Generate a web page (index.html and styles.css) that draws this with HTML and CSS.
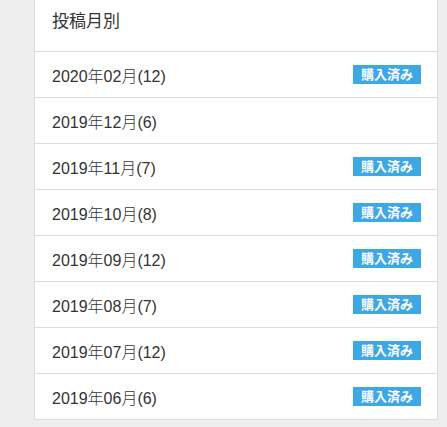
FILE: index.html
```html
<!DOCTYPE html>
<html lang="ja">
<head>
    <meta charset="UTF-8">
    <meta name="viewport" content="width=device-width, initial-scale=1.0">
    <title>投稿月別</title>
    <link rel="stylesheet" href="styles.css">
</head>
<body>

<div class="archive">
    <div class="archive-title">投稿月別</div>
    <ul class="archive-list">
        <li><a href="#">2020年02月(12)</a><span class="badge">購入済み</span></li>
        <li><a href="#">2019年12月(6)</a></li>
        <li><a href="#">2019年11月(7)</a><span class="badge">購入済み</span></li>
        <li><a href="#">2019年10月(8)</a><span class="badge">購入済み</span></li>
        <li><a href="#">2019年09月(12)</a><span class="badge">購入済み</span></li>
        <li><a href="#">2019年08月(7)</a><span class="badge">購入済み</span></li>
        <li><a href="#">2019年07月(12)</a><span class="badge">購入済み</span></li>
        <li><a href="#">2019年06月(6)</a><span class="badge">購入済み</span></li>
    </ul>
</div>

</body>
</html>
```

FILE: styles.css
```css
/* Reset */
* {
    margin: 0;
    padding: 0;
    box-sizing: border-box;
}
body {
    font-family: 'Liberation Sans', 'Noto Sans CJK JP', sans-serif;
    background-color: #EEEEEE;
    color: #333;
}

/* Sidebar panel */
.archive {
    margin-left: 34px;
    width: 404px;
    background: #fff;
    border-left: 1px solid #DDDDDD;
    border-right: 1px solid #DDDDDD;
}
.archive-title {
    font-size: 17px;
    line-height: 17px;
    padding: 13px 17px 21px;
    border-bottom: 1px solid #DDDDDD;
}

/* List rows */
.archive-list {
    list-style: none;
}
.archive-list li {
    height: 46px;
    display: flex;
    justify-content: space-between;
    align-items: center;
    padding: 0 16px 0 17px;
    border-bottom: 1px solid #DDDDDD;
}
.archive-list a {
    color: #333;
    text-decoration: none;
    font-size: 16px;
    font-weight: 300;
}

/* Purchased badge */
.badge {
    background-color: #3EA8E5;
    color: #fff;
    font-weight: bold;
    font-size: 13px;
    line-height: 19px;
    padding: 0 8px;
}
```
